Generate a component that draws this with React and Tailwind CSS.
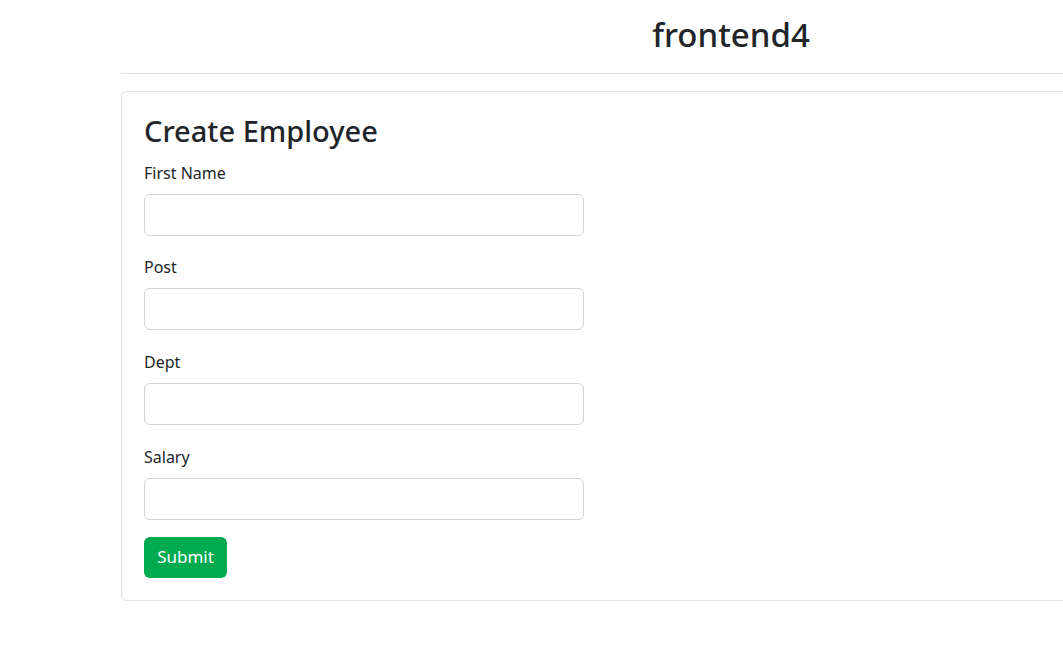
export default function App() {
  const fields = ['First Name', 'Post', 'Dept', 'Salary']

  return (
    <div className="w-screen min-h-screen overflow-hidden bg-white text-[#212529] font-['Noto_Sans','Liberation_Sans',sans-serif]">
      <div className="ml-[121px] w-[1220px]">
        {/* Header */}
        <div className="h-[74px] border-b border-[#dee2e6] flex justify-center pt-[15px]">
          <h2 className="text-[33px] font-medium leading-[1.2]">frontend4</h2>
        </div>

        {/* Card */}
        <div className="mt-[17px] border border-[#dee2e6] rounded-[6px] px-[22px] pt-[22px] pb-[22px]">
          <h3 className="text-[29px] font-medium leading-[1.2] mb-[12px]">Create Employee</h3>
          <form onSubmit={(e) => e.preventDefault()}>
            {fields.map((f, i) => (
              <div key={f} className={i === fields.length - 1 ? 'mb-[17px]' : 'mb-[19.6px]'}>
                <label className="block text-[16px] leading-6 mb-[9px]">{f}</label>
                <input
                  type="text"
                  className="block w-[440px] h-[42px] border border-[#ced4da] rounded-[6px] px-3 outline-none"
                />
              </div>
            ))}
            <button
              type="submit"
              className="h-[41px] w-[83px] rounded-[6px] bg-[#00ab4f] text-white text-[17px]"
            >
              Submit
            </button>
          </form>
        </div>
      </div>
    </div>
  )
}
